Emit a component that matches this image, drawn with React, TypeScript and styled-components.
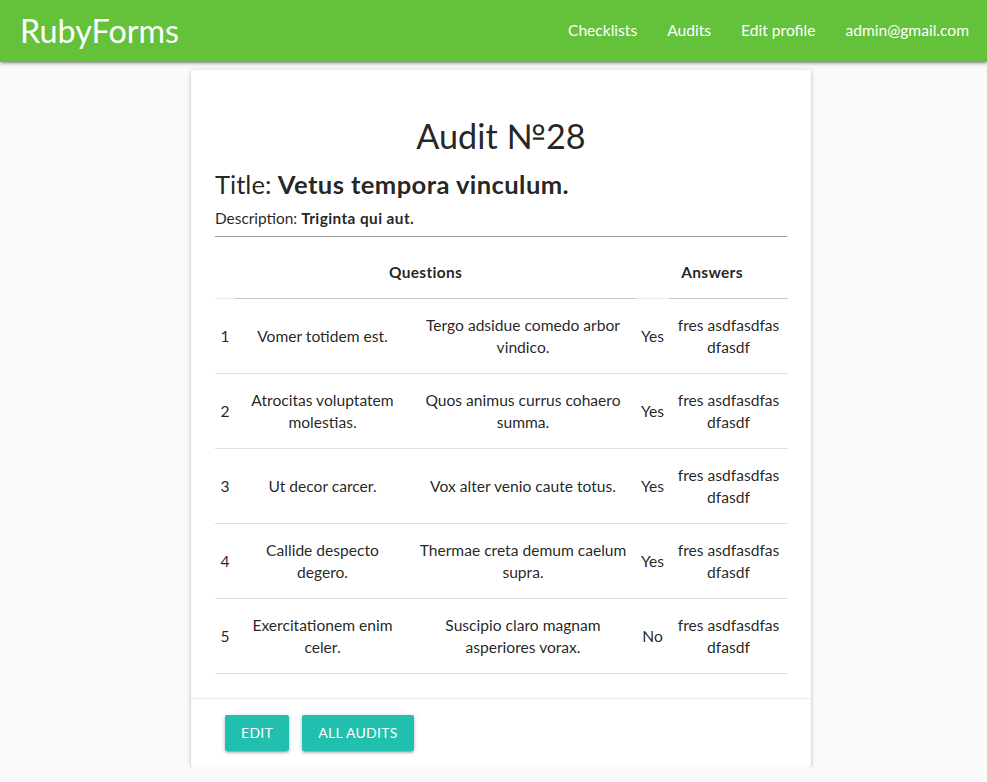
import React from "react";
import styled, { createGlobalStyle } from "styled-components";

const Global = createGlobalStyle`
  html, body { margin: 0; padding: 0; }
  body {
    background: #fafafa;
    font-family: Lato, "Noto Sans", sans-serif;
    font-size: 15.6px;
    line-height: 1.5;
    color: rgba(0, 0, 0, 0.87);
  }
  * { box-sizing: border-box; }
`;

const Nav = styled.nav`
  height: 62px;
  background: #63c23a;
  box-shadow: 0 2px 2px 0 rgba(0,0,0,0.14), 0 3px 1px -2px rgba(0,0,0,0.12), 0 1px 5px 0 rgba(0,0,0,0.2);
  display: flex;
  align-items: center;
  justify-content: space-between;
  padding: 0 3px 0 20px;
  color: #fff;
`;

const Brand = styled.a`
  font-size: 32.3px;
  color: #fff;
  text-decoration: none;
  line-height: 60px;
`;

const NavList = styled.ul`
  display: flex;
  list-style: none;
  margin: 0 0 3px;
  padding: 0;
`;

const NavLink = styled.a`
  display: block;
  padding: 0 15px;
  color: #fff;
  text-decoration: none;
  font-size: 15.6px;
  line-height: 56px;
`;

const Main = styled.main`
  display: flex;
  justify-content: center;
  padding: 8px 0 0 15px;
`;

const Card = styled.div`
  width: 620px;
  background: #fff;
  border-radius: 2px;
  box-shadow: 0 2px 2px 0 rgba(0,0,0,0.14), 0 3px 1px -2px rgba(0,0,0,0.12), 0 1px 5px 0 rgba(0,0,0,0.2);
`;

const CardContent = styled.div`
  padding: 24px;
`;

const Heading = styled.h4`
  font-size: 34.2px;
  font-weight: 400;
  line-height: 1.1;
  margin: 22.6px 0 13.7px;
  text-align: center;
`;

const TitleLine = styled.h5`
  font-size: 25.6px;
  font-weight: 400;
  line-height: 1.1;
  margin: 15.5px 0 9.8px;
`;

const Strong = styled.b<{ $spread?: number }>`
  font-weight: 700;
  letter-spacing: ${(p) => p.$spread ?? 0}px;
`;

const Desc = styled.p`
  font-size: 15.4px;
  line-height: 21px;
  margin: 0;
`;

const Rule = styled.hr`
  border: none;
  border-top: 1px solid #9e9e9e;
  margin: 7.4px 0 9px;
`;

const Table = styled.table`
  width: 100%;
  border-collapse: collapse;
  table-layout: fixed;
`;

const HeadRow = styled.tr`
  border-bottom: 1px solid #c6c6c6;
`;

const Th = styled.th`
  padding: 15px 5px;
  font-size: 15.5px;
  font-weight: 700;
  letter-spacing: 0.3px;
  line-height: 22px;
  text-align: center;
`;

const BodyRow = styled.tr`
  border-bottom: 1px solid #e0e0e0;
`;

const Td = styled.td<{ $light?: boolean }>`
  padding: 15px 5px;
  text-align: center;
  vertical-align: middle;
  line-height: 22px;
  font-size: 15.6px;
  ${(p) => (p.$light ? "border-top: 1px solid #ececec;" : "")}
`;

const Actions = styled.div`
  border-top: 1px solid rgba(160,160,160,0.2);
  padding: 16px 24px 16px 34px;
  display: flex;
  gap: 13px;
`;

const Button = styled.a`
  display: inline-block;
  height: 36px;
  line-height: 36px;
  padding: 0 16px;
  background: #20bfae;
  color: #fff;
  text-transform: uppercase;
  font-size: 14px;
  letter-spacing: 0.3px;
  border-radius: 2px;
  text-decoration: none;
  box-shadow: 0 2px 2px 0 rgba(0,0,0,0.14), 0 3px 1px -2px rgba(0,0,0,0.12), 0 1px 5px 0 rgba(0,0,0,0.2);
`;

const rows = [
  ["Vomer totidem est.", "Tergo adsidue comedo arbor vindico.", "Yes"],
  ["Atrocitas voluptatem molestias.", "Quos animus currus cohaero summa.", "Yes"],
  ["Ut decor carcer.", "Vox alter venio caute totus.", "Yes"],
  ["Callide despecto degero.", "Thermae creta demum caelum supra.", "Yes"],
  ["Exercitationem enim celer.", "Suscipio claro magnam asperiores vorax.", "No"],
];

export default function App() {
  return (
    <>
      <Global />
      <Nav>
        <Brand href="#">RubyForms</Brand>
        <NavList>
          <li><NavLink href="#">Checklists</NavLink></li>
          <li><NavLink href="#">Audits</NavLink></li>
          <li><NavLink href="#">Edit profile</NavLink></li>
          <li><NavLink href="#">admin@gmail.com</NavLink></li>
        </NavList>
      </Nav>
      <Main>
        <Card>
          <CardContent>
            <Heading>Audit №28</Heading>
            <TitleLine>
              Title: <Strong $spread={0.4}>Vetus tempora vinculum.</Strong>
            </TitleLine>
            <Desc>
              Description: <Strong $spread={0.4}>Triginta qui aut.</Strong>
            </Desc>
            <Rule />
            <Table>
              <colgroup>
                <col style={{ width: 20 }} />
                <col style={{ width: 175 }} />
                <col style={{ width: 226 }} />
                <col style={{ width: 33 }} />
                <col style={{ width: 119 }} />
              </colgroup>
              <thead>
                <HeadRow>
                  <Th colSpan={3}>Questions</Th>
                  <Th colSpan={2}>Answers</Th>
                </HeadRow>
              </thead>
              <tbody>
                {rows.map((r, i) => (
                  <BodyRow key={i}>
                    <Td $light={i === 0}>{i + 1}</Td>
                    <Td>{r[0]}</Td>
                    <Td>{r[1]}</Td>
                    <Td $light={i === 0}>{r[2]}</Td>
                    <Td>fres asdfasdfas dfasdf</Td>
                  </BodyRow>
                ))}
              </tbody>
            </Table>
          </CardContent>
          <Actions>
            <Button href="#">Edit</Button>
            <Button href="#">All audits</Button>
          </Actions>
        </Card>
      </Main>
    </>
  );
}
